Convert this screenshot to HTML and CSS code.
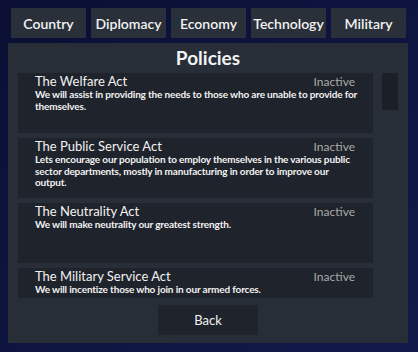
FILE: index.html
```html
<!DOCTYPE html>
<html>
<head>
    <title>Policies</title>
    <link rel="stylesheet" href="styles.css">
</head>
<body>
    <div class="screen">
        <div class="tabs">
            <div class="tab">Country</div>
            <div class="tab">Diplomacy</div>
            <div class="tab">Economy</div>
            <div class="tab">Technology</div>
            <div class="tab">Military</div>
        </div>
        <div class="panel">
            <div class="title">Policies</div>
            <div class="list-wrap">
                <div class="list">
                    <div class="policy">
                        <div class="policy-head">
                            <span class="policy-name">The Welfare Act</span>
                            <span class="policy-state">Inactive</span>
                        </div>
                        <div class="policy-desc">We will assist in providing the needs to those who are unable to provide for themselves.</div>
                    </div>
                    <div class="policy">
                        <div class="policy-head">
                            <span class="policy-name">The Public Service Act</span>
                            <span class="policy-state">Inactive</span>
                        </div>
                        <div class="policy-desc">Lets encourage our population to employ themselves in the various public sector departments, mostly in manufacturing in order to improve our output.</div>
                    </div>
                    <div class="policy">
                        <div class="policy-head">
                            <span class="policy-name">The Neutrality Act</span>
                            <span class="policy-state">Inactive</span>
                        </div>
                        <div class="policy-desc">We will make neutrality our greatest strength.</div>
                    </div>
                    <div class="policy">
                        <div class="policy-head">
                            <span class="policy-name">The Military Service Act</span>
                            <span class="policy-state">Inactive</span>
                        </div>
                        <div class="policy-desc">We will incentize those who join in our armed forces.</div>
                    </div>
                </div>
                <div class="scrollbar">
                    <div class="thumb"></div>
                </div>
            </div>
            <div class="back">Back</div>
        </div>
    </div>
</body>
</html>
```

FILE: styles.css
```css
body {
    margin: 0;
    width: 418px;
    height: 352px;
    overflow: hidden;
    background-image: linear-gradient(to bottom right, #0a0f33, #121a4b);
    font-family: "Lato", "Liberation Sans", sans-serif;
    color: #f2f2f2;
}
.screen {
    padding: 8px 0 0 8px;
}
.tabs {
    display: flex;
    gap: 5px;
    padding-left: 3px;
    height: 30px;
}
.tab {
    width: 75px;
    background-color: #29303a;
    display: flex;
    align-items: center;
    justify-content: center;
    font-size: 14px;
    font-weight: 600;
}
.panel {
    margin-top: 5px;
    width: 400px;
    height: 300px;
    background-color: #282e38;
    display: flex;
    flex-direction: column;
}
.title {
    height: 30px;
    line-height: 30px;
    text-align: center;
    font-size: 19px;
    font-weight: 700;
}
.list-wrap {
    display: flex;
    gap: 9px;
    padding-left: 10px;
    height: 225px;
}
.list {
    width: 355px;
    overflow: hidden;
    display: flex;
    flex-direction: column;
    gap: 5px;
}
.policy {
    flex: none;
    height: 60px;
    background-color: #1f232b;
    padding: 0 14px 0 17px;
}
.policy-head {
    display: flex;
    justify-content: space-between;
    align-items: baseline;
    height: 16px;
    line-height: 16px;
    padding-right: 4px;
}
.policy-name {
    font-size: 13px;
}
.policy-state {
    font-size: 12px;
    color: #a9a9a9;
}
.policy-desc {
    font-size: 10px;
    line-height: 11.5px;
    font-weight: 700;
    letter-spacing: -0.15px;
}
.scrollbar {
    width: 16px;
}
.thumb {
    height: 37px;
    background-color: #1c1f26;
}
.back {
    width: 100px;
    height: 30px;
    margin: 7px auto 0;
    background-color: #1f232b;
    display: flex;
    align-items: center;
    justify-content: center;
    font-size: 13px;
}
```
